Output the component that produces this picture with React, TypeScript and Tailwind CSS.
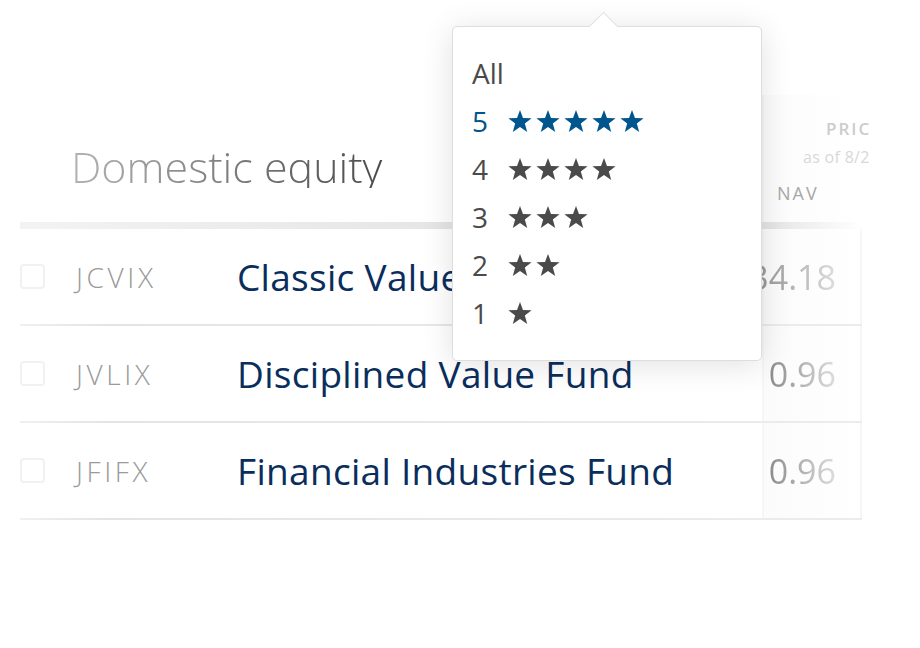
import React from "react";

const Star = ({ color }: { color: string }) => (
  <svg width="26" height="25" viewBox="0 0 24 23" className="shrink-0">
    <path
      d="M12 0.8l2.75 7.45 7.95.3-6.25 4.9 2.2 7.65L12 16.6l-6.65 4.5 2.2-7.65-6.25-4.9 7.95-.3z"
      fill={color}
    />
  </svg>
);

const rows = [
  { t: "JCVIX", n: "Classic Value Fund", v: "34.18" },
  { t: "JVLIX", n: "Disciplined Value Fund", v: "0.96" },
  { t: "JFIFX", n: "Financial Industries Fund", v: "0.96" },
];

const ratings = [5, 4, 3, 2, 1];

export default function App() {
  return (
    <div
      className="relative w-[920px] h-[648px] bg-white overflow-hidden"
      style={{ fontFamily: '"Open Sans", "Noto Sans", sans-serif' }}
    >
      <div className="w-[869px] overflow-hidden pl-[20px]">
        <div className="w-[842px] relative">
          {/* header */}
          <div className="h-[222px] flex">
            <div className="flex-1 pl-[51px] pt-[145px]">
              <div className="text-[43px] leading-none font-light bg-gradient-to-r from-[#b4b4b4] to-[#4a4a4a] bg-clip-text text-transparent w-[314px] whitespace-nowrap">
                Domestic equity
              </div>
            </div>
            <div className="w-[100px] flex flex-col">
              <div className="h-[95px]" />
              <div className="flex-1 relative border-l-2 border-[#f5f5f5] bg-gradient-to-r from-[#fcfcfc] to-white">
                <div className="absolute left-[62px] top-[21px] text-[17px] font-semibold tracking-[2px] text-[#cccccc] whitespace-nowrap">
                  PRICE
                </div>
                <div className="absolute left-[39px] top-[50px] text-[16px] tracking-[0.3px] text-[#d8d8d8] whitespace-nowrap">
                  as of 8/25
                </div>
                <div className="absolute left-[13px] top-[85px] text-[18px] tracking-[2px] text-[#a8a8a8]">
                  NAV
                </div>
              </div>
            </div>
          </div>
          <div className="h-[7px] bg-gradient-to-r from-[#f3f3f3] via-[#dcdcdc] via-[85%] to-white" />
          {rows.map((r) => (
            <div key={r.t}>
              <div className="h-[95px] flex items-center">
                <div className="w-[25px] h-[25px] rounded-[4px] border-2 border-[#f1f1f1]" />
                <div className="ml-[31px] w-[161px] text-[28px] font-light tracking-[3.6px] text-[#9a9a9a] leading-none">
                  {r.t}
                </div>
                <div className="flex-1 text-[37px] tracking-[0.3px] text-[#0a2e5c] leading-none whitespace-nowrap">
                  {r.n}
                </div>
                <div className="w-[100px] self-stretch border-l-2 border-r-2 border-[#f6f6f6] bg-gradient-to-r from-[#fbfbfb] to-white flex items-center justify-end pr-[24px]">
                  <span className="text-[34px] leading-none bg-gradient-to-r from-[#8c8c8c] to-[#dddddd] bg-clip-text text-transparent">
                    {r.v}
                  </span>
                </div>
              </div>
              <div className="h-[2px] bg-gradient-to-r from-[#f0f0f0] via-[#e4e4e4] via-[10%] to-[#ececec]" />
            </div>
          ))}
        </div>
      </div>

      {/* popup */}
      <div className="absolute left-[452px] top-[26px] w-[310px] h-[335px] bg-white border border-[#dedede] rounded-[5px] shadow-[0_4px_32px_rgba(0,0,0,0.12)]">
        <div className="absolute left-[140px] top-[-11px] w-[21px] h-[21px] rotate-45 bg-white border-l border-t border-[#dedede]" />
        <div className="relative pl-[19px] pt-[22px]">
          <div className="h-[48px] flex items-center text-[28px] text-[#4a4a4a]">All</div>
          {ratings.map((n) => {
            const c = n === 5 ? "#00558c" : "#4a4a4a";
            return (
              <div key={n} className="h-[48px] flex items-center">
                <span className="w-[35px] text-[28px]" style={{ color: c }}>
                  {n}
                </span>
                <div className="flex gap-[2px]">
                  {Array.from({ length: n }).map((_, i) => (
                    <Star key={i} color={c} />
                  ))}
                </div>
              </div>
            );
          })}
        </div>
      </div>
    </div>
  );
}
